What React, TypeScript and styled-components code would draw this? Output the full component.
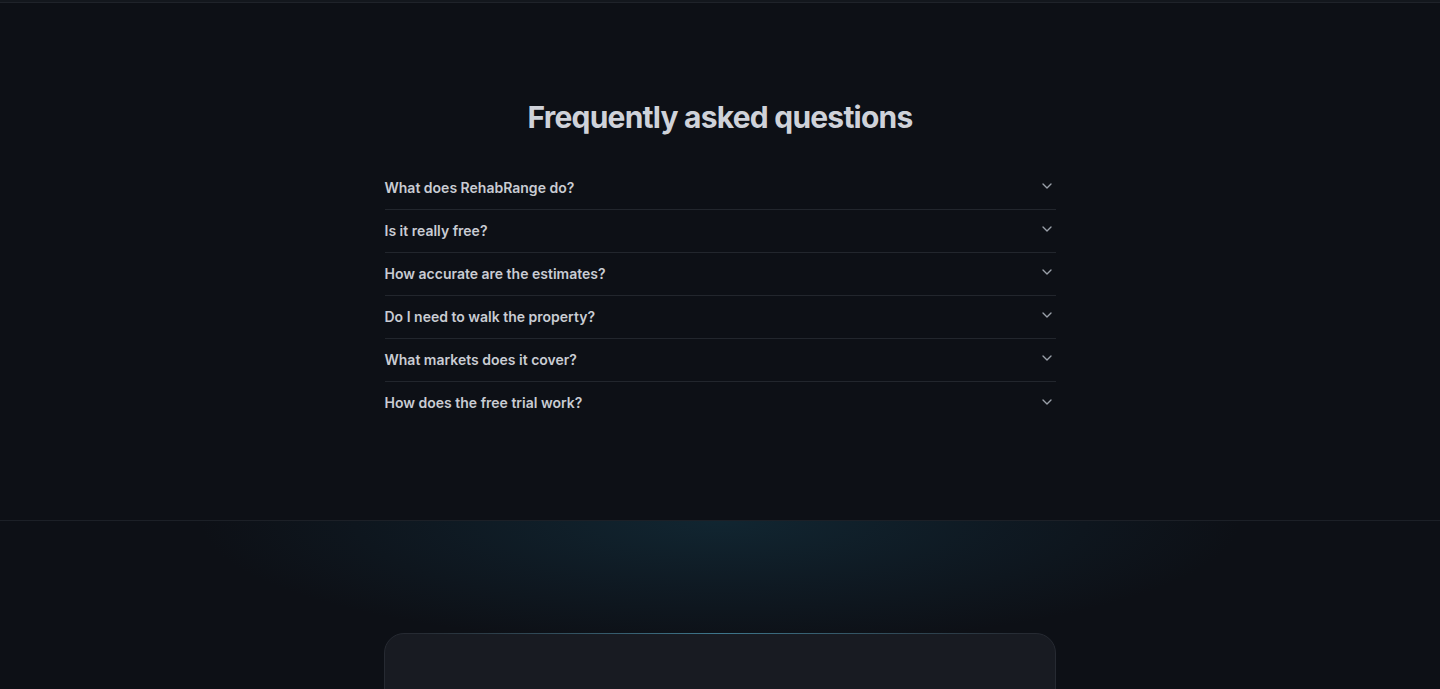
import React from "react";
import styled, { createGlobalStyle } from "styled-components";

const GlobalStyle = createGlobalStyle`
  html, body {
    margin: 0;
    padding: 0;
    background: #0d1016;
    font-family: Inter, "Noto Sans", sans-serif;
    -webkit-font-smoothing: antialiased;
  }
  * { box-sizing: border-box; }
`;

const Page = styled.div`
  min-height: 689px;
  background: #0d1016;
  overflow: hidden;
`;

const TopEdge = styled.div`
  height: 3px;
  background: #13171d;
  border-bottom: 1px solid #1f232a;
`;

const FaqSection = styled.section`
  padding: 96px 0 95px;
  border-bottom: 1px solid #1c2027;
  display: flex;
  flex-direction: column;
  align-items: center;
`;

const Heading = styled.h2`
  margin: 0 0 32px;
  font-size: 30px;
  line-height: 36px;
  font-weight: 700;
  letter-spacing: -0.78px;
  color: #cfd2d9;
`;

const List = styled.div`
  width: 671px;
`;

const Item = styled.button<{ $last?: boolean }>`
  all: unset;
  box-sizing: border-box;
  width: 100%;
  height: 43px;
  display: flex;
  align-items: center;
  justify-content: space-between;
  padding-right: 1px;
  border-bottom: ${(p) => (p.$last ? "none" : "1px solid #22262d")};
  cursor: pointer;
`;

const Question = styled.span`
  font-size: 14px;
  font-weight: 600;
  color: #c9ccd3;
  padding-bottom: 2px;
`;

const Chevron = styled.svg`
  width: 16px;
  height: 16px;
  color: #9aa0a9;
  margin-top: -4px;
`;

const CtaSection = styled.section`
  position: relative;
  padding-top: 112px;
  display: flex;
  justify-content: center;
  background: radial-gradient(
    ellipse 520px 125px at 50% 0%,
    rgba(22, 64, 82, 0.45) 0%,
    rgba(18, 46, 62, 0.3) 55%,
    rgba(13, 16, 22, 0) 100%
  );
`;

const Card = styled.div`
  position: relative;
  width: 672px;
  height: 200px;
  border-radius: 20px;
  background: #181b22;
  border: 1px solid #262a32;

  &::before {
    content: "";
    position: absolute;
    top: -1px;
    left: 30px;
    right: 30px;
    height: 1px;
    background: linear-gradient(
      90deg,
      rgba(60, 110, 130, 0) 0%,
      rgba(66, 132, 156, 0.85) 50%,
      rgba(60, 110, 130, 0) 100%
    );
  }
`;

const questions = [
  "What does RehabRange do?",
  "Is it really free?",
  "How accurate are the estimates?",
  "Do I need to walk the property?",
  "What markets does it cover?",
  "How does the free trial work?",
];

export default function App() {
  return (
    <>
      <GlobalStyle />
      <Page>
        <TopEdge />
        <FaqSection>
          <Heading>Frequently asked questions</Heading>
          <List>
            {questions.map((q, i) => (
              <Item key={q} $last={i === questions.length - 1}>
                <Question>{q}</Question>
                <Chevron viewBox="0 0 24 24" fill="none" stroke="currentColor" strokeWidth="2" strokeLinecap="round" strokeLinejoin="round">
                  <path d="m6 9 6 6 6-6" />
                </Chevron>
              </Item>
            ))}
          </List>
        </FaqSection>
        <CtaSection>
          <Card />
        </CtaSection>
      </Page>
    </>
  );
}
